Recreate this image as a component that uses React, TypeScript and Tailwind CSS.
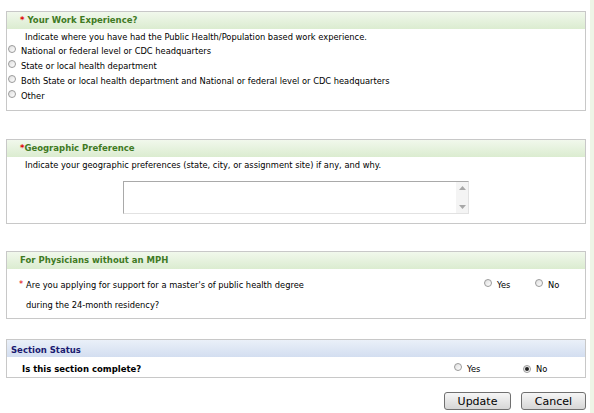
import React from "react";

const font = { fontFamily: "'DejaVu Sans', Verdana, sans-serif" };

function Radio({ checked = false }: { checked?: boolean }) {
  return (
    <span className="inline-flex w-[8px] h-[8px] rounded-full border border-[#9a9a9a] bg-gradient-to-br from-[#dedede] to-white items-center justify-center shrink-0">
      {checked && <span className="w-[4px] h-[4px] rounded-full bg-[#222]" />}
    </span>
  );
}

function GreenHeader({ children, className = "" }: { children: React.ReactNode; className?: string }) {
  return (
    <div className={`h-[17px] flex items-center bg-gradient-to-b from-[#f1f8ec] to-[#dbecd0] text-[#3f7a24] font-bold text-[8.5px] ${className}`}>
      {children}
    </div>
  );
}

export default function App() {
  return (
    <div className="w-[594px] h-[413px] bg-white flex text-[8.3px] text-black overflow-hidden" style={font}>
      <div className="w-[590px] pl-[6px] pr-[4px] pt-[11px] flex flex-col">
        {/* Panel 1 */}
        <div className="h-[100px] border border-[#c8c8c8] flex flex-col">
          <GreenHeader className="pl-[13px] gap-[3px]">
            <span className="text-[#e00000]">*</span>
            <span>Your Work Experience?</span>
          </GreenHeader>
          <div className="flex flex-col">
            <div className="h-[14px] mt-[1px] flex items-center pl-[18px]">Indicate where you have had the Public Health/Population based work experience.</div>
            {[
              "National or federal level or CDC headquarters",
              "State or local health department",
              "Both State or local health department and National or federal level or CDC headquarters",
              "Other",
            ].map((t) => (
              <div key={t} className="h-[15px] flex items-center gap-[5px] pl-[1px]">
                <span className="-mt-[3px]"><Radio /></span>
                <span>{t}</span>
              </div>
            ))}
          </div>
        </div>

        {/* Panel 2 */}
        <div className="mt-[28px] h-[85px] border border-[#c8c8c8] flex flex-col">
          <GreenHeader className="pl-[13px]">
            <span className="text-[#e00000]">*</span>
            <span>Geographic Preference</span>
          </GreenHeader>
          <div className="h-[14px] mt-[1px] flex items-center pl-[18px]">Indicate your geographic preferences (state, city, or assignment site) if any, and why.</div>
          <div className="pl-[116px] mt-[9px]">
            <div className="w-[346px] h-[33px] border border-[#a9a9a9] border-b-[#e2e2e2] border-r-[#e2e2e2] flex justify-end bg-white">
              <div className="w-[12px] h-full bg-[#f4f4f4] flex flex-col justify-between items-center py-[4px]">
                <svg width="7" height="4" viewBox="0 0 7 4"><path d="M0 4 L3.5 0 L7 4Z" fill="#a8a8a8" /></svg>
                <svg width="7" height="4" viewBox="0 0 7 4"><path d="M0 0 L3.5 4 L7 0Z" fill="#a8a8a8" /></svg>
              </div>
            </div>
          </div>
        </div>

        {/* Panel 3 */}
        <div className="mt-[27px] h-[68px] border border-[#c8c8c8] flex flex-col">
          <GreenHeader className="pl-[13px]">
            <span>For Physicians without an MPH</span>
          </GreenHeader>
          <div className="flex h-[21px] items-center mt-[6px]">
            <span className="text-[#e00000] pl-[12px] w-[19px] -mt-[3px]">*</span>
            <span className="w-[458px]">Are you applying for support for a master's of public health degree</span>
            <span className="-mt-[3px]"><Radio /></span>
            <span className="ml-[5px] w-[38px]">Yes</span>
            <span className="-mt-[3px]"><Radio /></span>
            <span className="ml-[5px]">No</span>
          </div>
          <div className="h-[14px] mt-[2px] flex items-center pl-[19px]">during the 24-month residency?</div>
        </div>

        {/* Panel 4 */}
        <div className="mt-[20px] h-[39px] border border-[#c8c8c8] flex flex-col">
          <div className="h-[17px] flex items-end pl-[4px] bg-gradient-to-b from-[#eaf0f9] to-[#d3def0] text-[#1a1a70] font-bold text-[8.5px]">
            Section Status
          </div>
          <div className="flex items-center h-[20px] pt-[4px]">
            <span className="pl-[15px] w-[447px] font-bold text-[8.5px]">Is this section complete?</span>
            <span className="-mt-[1px]"><Radio /></span>
            <span className="ml-[5px] w-[56px]">Yes</span>
            <span className="-mt-[1px]"><Radio checked /></span>
            <span className="ml-[5px]">No</span>
          </div>
        </div>

        {/* Buttons */}
        <div className="mt-[14px] flex justify-end gap-[10px]">
          <button className="w-[67px] h-[18px] rounded-[3px] border border-[#707070] bg-gradient-to-b from-[#f6f6f6] to-[#d6d6d6] text-[11px] leading-none flex items-center justify-center" style={font}>Update</button>
          <button className="w-[65px] h-[18px] rounded-[3px] border border-[#707070] bg-gradient-to-b from-[#f6f6f6] to-[#d6d6d6] text-[11px] leading-none flex items-center justify-center" style={font}>Cancel</button>
        </div>
      </div>
      <div className="w-[4px] h-full bg-[#eef5e6]" />
    </div>
  );
}
